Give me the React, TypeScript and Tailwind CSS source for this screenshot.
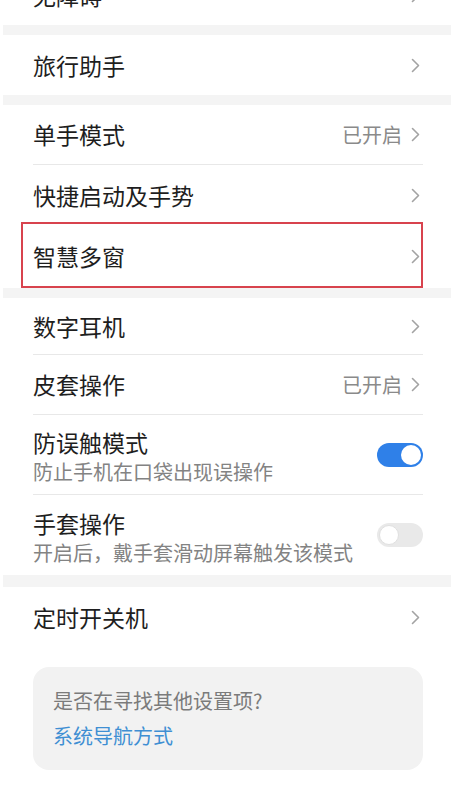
import React from 'react';

const Chevron = () => (
  <svg width="9" height="15" viewBox="0 0 9 15" fill="none" className="shrink-0">
    <polyline points="1.5,1.5 7.5,7.5 1.5,13.5" stroke="#a3a3a3" strokeWidth="1.6" strokeLinecap="round" strokeLinejoin="round" />
  </svg>
);

const Band = () => <div className="ml-[3px] h-[10px] bg-[#f4f4f4]" />;

interface RowProps {
  title: string;
  value?: string;
  divider?: boolean;
  height?: string;
  children?: React.ReactNode;
}

const Row: React.FC<RowProps> = ({ title, value, divider, height = 'h-[60px]', children }) => (
  <div className={`relative pl-[33px] pr-[28px] ${height}`}>
    <div className={`flex h-full items-center justify-between ${divider ? 'border-b border-[#e8e8e8]' : ''}`}>
      <span className="text-[23px] leading-none text-[#1e1e1e]">{title}</span>
      <div className="flex items-center gap-[9px] pr-[3px]">
        {value && <span className="text-[20px] leading-none text-[#8a8a8a]">{value}</span>}
        <Chevron />
      </div>
    </div>
    {children}
  </div>
);

interface ToggleRowProps {
  title: string;
  subtitle: string;
  on: boolean;
  divider?: boolean;
}

const ToggleRow: React.FC<ToggleRowProps> = ({ title, subtitle, on, divider }) => (
  <div className="h-[80px] pl-[33px] pr-[28px]">
    <div className={`flex h-full items-center justify-between ${divider ? 'border-b border-[#e8e8e8]' : ''}`}>
      <div className="flex flex-col gap-[8px] pt-[4px]">
        <span className="text-[23px] leading-none text-[#1e1e1e]">{title}</span>
        <span className="text-[20px] leading-none text-[#838383]">{subtitle}</span>
      </div>
      {on ? (
        <div className="flex h-[24px] w-[46px] items-center justify-end rounded-full bg-[#2f80e8] p-[2px]">
          <div className="h-[20px] w-[20px] rounded-full bg-white" />
        </div>
      ) : (
        <div className="flex h-[24px] w-[46px] items-center rounded-full bg-[#e9e9e9] p-[2px]">
          <div className="h-[20px] w-[20px] rounded-full border border-[#e0e0e0] bg-white" />
        </div>
      )}
    </div>
  </div>
);

export default function App() {
  return (
    <div
      className="h-[786px] w-[451px] overflow-hidden bg-white"
      style={{ fontFamily: '"Noto Sans CJK SC", "Noto Sans", sans-serif' }}
    >
      <div className="-mt-[35px]">
        <Row title="无障碍" />
      </div>
      <Band />
      <Row title="旅行助手" />
      <Band />
      <Row title="单手模式" value="已开启" divider />
      <Row title="快捷启动及手势" />
      <Row title="智慧多窗" height="h-[63px]">
        <div className="pointer-events-none absolute bottom-0 left-[21px] right-[28px] top-[-3px] border-2 border-[#d8434e]" />
      </Row>
      <Band />
      <Row title="数字耳机" divider height="h-[57px]" />
      <Row title="皮套操作" value="已开启" divider />
      <ToggleRow title="防误触模式" subtitle="防止手机在口袋出现误操作" on divider />
      <ToggleRow title="手套操作" subtitle="开启后，戴手套滑动屏幕触发该模式" on={false} />
      <div className="ml-[3px] h-[12px] bg-[#f4f4f4]" />
      <Row title="定时开关机" />
      <div className="pl-[33px] pr-[28px] pt-[20px]">
        <div className="flex h-[103px] flex-col justify-center gap-[15px] rounded-[16px] bg-[#f2f2f2] pl-[20px]">
          <span className="text-[20px] leading-none text-[#7b7b7b]">是否在寻找其他设置项?</span>
          <span className="text-[20px] leading-none text-[#3f8fd3]">系统导航方式</span>
        </div>
      </div>
    </div>
  );
}
